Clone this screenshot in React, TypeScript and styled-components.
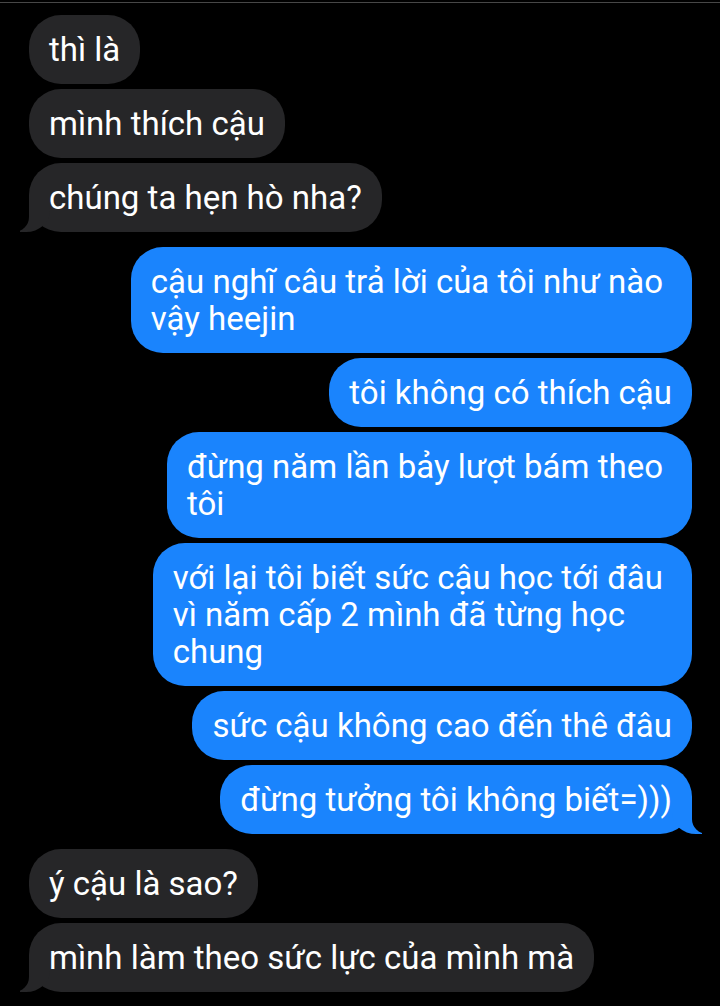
import styled, { createGlobalStyle, css } from 'styled-components'

const GlobalStyle = createGlobalStyle`
  html, body {
    margin: 0;
    padding: 0;
    background: #000;
  }
  * {
    box-sizing: border-box;
  }
`

type Side = 'me' | 'them'

const BUBBLE_COLORS: Record<Side, string> = {
  me: '#1a84fd',
  them: '#262628',
}

const Page = styled.div`
  min-height: 100vh;
  background: #000;
  padding-top: 2px;
  font-family: Roboto, 'Noto Sans', 'DejaVu Sans', sans-serif;
`

const Thread = styled.main`
  border-top: 1px solid #474747;
  padding: 12px 28px 14px 29px;
  display: flex;
  flex-direction: column;
  gap: 15px;
`

const Group = styled.section<{ $from: Side }>`
  display: flex;
  flex-direction: column;
  gap: 5px;
  align-items: ${(p) => (p.$from === 'me' ? 'flex-end' : 'flex-start')};
`

const tailLeft = css`
  &::before {
    content: '';
    position: absolute;
    z-index: -1;
    bottom: 0;
    left: -9px;
    width: 30px;
    height: 36px;
    background: ${BUBBLE_COLORS.them};
    border-bottom-right-radius: 24px 21px;
  }
  &::after {
    content: '';
    position: absolute;
    z-index: -1;
    bottom: 0;
    left: -39px;
    width: 39px;
    height: 36px;
    background: #000;
    border-bottom-right-radius: 15px;
  }
`

const tailRight = css`
  &::before {
    content: '';
    position: absolute;
    z-index: -1;
    bottom: 0;
    right: -10px;
    width: 30px;
    height: 36px;
    background: ${BUBBLE_COLORS.me};
    border-bottom-left-radius: 24px 21px;
  }
  &::after {
    content: '';
    position: absolute;
    z-index: -1;
    bottom: 0;
    right: -39px;
    width: 39px;
    height: 36px;
    background: #000;
    border-bottom-left-radius: 15px;
  }
`

const Bubble = styled.div<{ $from: Side; $tail?: boolean; $multi?: boolean }>`
  position: relative;
  z-index: 0;
  width: fit-content;
  padding: 16px ${(p) => (p.$multi ? '29px' : '20px')} 16px 20px;
  border-radius: 32px;
  background: ${(p) => BUBBLE_COLORS[p.$from]};
  color: #fff;
  font-size: 33px;
  line-height: 37px;
  white-space: nowrap;
  ${(p) => p.$tail && (p.$from === 'me' ? tailRight : tailLeft)}
`

type Message = string[]

const groups: { from: Side; messages: Message[] }[] = [
  {
    from: 'them',
    messages: [['thì là'], ['mình thích cậu'], ['chúng ta hẹn hò nha?']],
  },
  {
    from: 'me',
    messages: [
      ['cậu nghĩ câu trả lời của tôi như nào', 'vậy heejin'],
      ['tôi không có thích cậu'],
      ['đừng năm lần bảy lượt bám theo', 'tôi'],
      ['với lại tôi biết sức cậu học tới đâu', 'vì năm cấp 2 mình đã từng học', 'chung'],
      ['sức cậu không cao đến thê đâu'],
      ['đừng tưởng tôi không biết=)))'],
    ],
  },
  {
    from: 'them',
    messages: [['ý cậu là sao?'], ['mình làm theo sức lực của mình mà']],
  },
]

export default function App() {
  return (
    <>
      <GlobalStyle />
      <Page>
        <Thread>
          {groups.map((g, gi) => (
            <Group key={gi} $from={g.from}>
              {g.messages.map((lines, mi) => (
                <Bubble
                  key={mi}
                  $from={g.from}
                  $tail={mi === g.messages.length - 1}
                  $multi={lines.length > 1}
                >
                  {lines.map((line, li) => (
                    <span key={li}>
                      {li > 0 && <br />}
                      {line}
                    </span>
                  ))}
                </Bubble>
              ))}
            </Group>
          ))}
        </Thread>
      </Page>
    </>
  )
}
